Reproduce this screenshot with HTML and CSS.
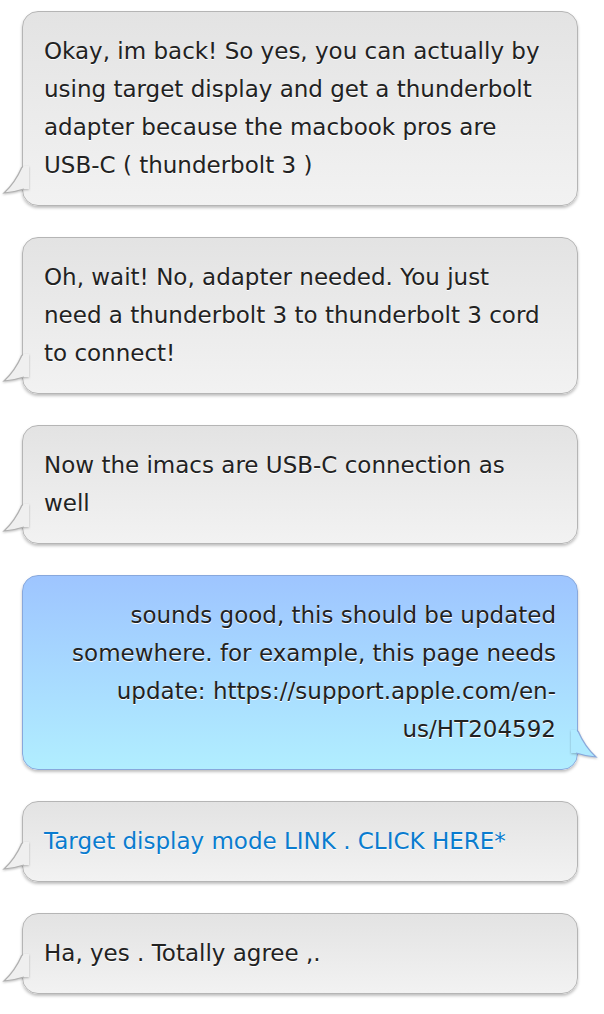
FILE: index.html
```html
<!DOCTYPE html>
<html lang="en">
<head>
    <meta charset="UTF-8">
    <meta name="viewport" content="width=device-width, initial-scale=1.0">
    <title>Conversation</title>
    <link rel="stylesheet" href="styles.css">
</head>
<body>

    <div class="thread">
        <div class="bubble">
            <p>Okay, im back! So yes, you can actually by using target display and get a thunderbolt adapter because the macbook pros are USB-C ( thunderbolt 3 )</p>
            <svg class="tail" width="24" height="40" viewBox="0 0 24 40"><path class="tail-fill" d="M21 0 L19 2 Q12 17 1 27 Q12 26 21 23 L26 23 L26 0 Z"/><path class="tail-line" d="M19 1 Q12 17 1 27 Q12 26 21 23"/></svg>
        </div>

        <div class="bubble">
            <p>Oh, wait! No, adapter needed. You just need a thunderbolt 3 to thunderbolt 3 cord to connect!</p>
            <svg class="tail" width="24" height="40" viewBox="0 0 24 40"><path class="tail-fill" d="M21 0 L19 2 Q12 17 1 27 Q12 26 21 23 L26 23 L26 0 Z"/><path class="tail-line" d="M19 1 Q12 17 1 27 Q12 26 21 23"/></svg>
        </div>

        <div class="bubble">
            <p>Now the imacs are USB-C connection as well</p>
            <svg class="tail" width="24" height="40" viewBox="0 0 24 40"><path class="tail-fill" d="M21 0 L19 2 Q12 17 1 27 Q12 26 21 23 L26 23 L26 0 Z"/><path class="tail-line" d="M19 1 Q12 17 1 27 Q12 26 21 23"/></svg>
        </div>

        <div class="bubble mine">
            <p>sounds good, this should be updated somewhere. for example, this page needs update: https://support.apple.com/en-us/HT204592</p>
            <svg class="tail" width="24" height="40" viewBox="0 0 24 40"><path class="tail-fill" d="M21 0 L19 2 Q12 17 1 27 Q12 26 21 23 L26 23 L26 0 Z"/><path class="tail-line" d="M19 1 Q12 17 1 27 Q12 26 21 23"/></svg>
        </div>

        <div class="bubble">
            <p><a href="#">Target display mode LINK . CLICK HERE*</a></p>
            <svg class="tail" width="24" height="40" viewBox="0 0 24 40"><path class="tail-fill" d="M21 0 L19 2 Q12 17 1 27 Q12 26 21 23 L26 23 L26 0 Z"/><path class="tail-line" d="M19 1 Q12 17 1 27 Q12 26 21 23"/></svg>
        </div>

        <div class="bubble">
            <p>Ha, yes . Totally agree ,.</p>
            <svg class="tail" width="24" height="40" viewBox="0 0 24 40"><path class="tail-fill" d="M21 0 L19 2 Q12 17 1 27 Q12 26 21 23 L26 23 L26 0 Z"/><path class="tail-line" d="M19 1 Q12 17 1 27 Q12 26 21 23"/></svg>
        </div>
    </div>

</body>
</html>
```

FILE: styles.css
```css
body {
    margin: 0;
    background-color: #fff;
    font-family: 'DejaVu Sans', 'Verdana', sans-serif;
    color: #222;
}
.thread {
    display: flex;
    flex-direction: column;
    gap: 31px;
    padding: 11px 26px 20px 22px;
}
.bubble {
    position: relative;
    padding: 20px 28px 21px 21px;
    border: 1px solid #b5b5b5;
    border-radius: 16px;
    background: linear-gradient(to bottom, #e3e3e3, #f2f2f2);
    box-shadow: 0 2px 3px rgba(0, 0, 0, 0.25);
}
.bubble p {
    margin: 0;
    font-size: 23px;
    line-height: 38px;
    text-shadow: 0 1px 0 #fff;
}
.bubble a {
    color: #0a7ccf;
    text-decoration: none;
}
.tail {
    position: absolute;
    left: -20px;
    bottom: -1px;
    overflow: visible;
    filter: drop-shadow(0 1px 1px rgba(0, 0, 0, 0.25));
}
.tail-fill {
    fill: #efefef;
}
.tail-line {
    fill: none;
    stroke: #b0b0b0;
    stroke-width: 1.2;
}
.mine {
    padding: 20px 21px 21px 28px;
    border-color: #88a8dc;
    background: linear-gradient(to bottom, #9ec5ff, #b1eeff);
}
.mine p {
    text-align: right;
}
.mine .tail {
    left: auto;
    right: -20px;
    transform: scaleX(-1);
}
.mine .tail-fill {
    fill: #afeaff;
}
.mine .tail-line {
    stroke: #88a8dc;
}
```
